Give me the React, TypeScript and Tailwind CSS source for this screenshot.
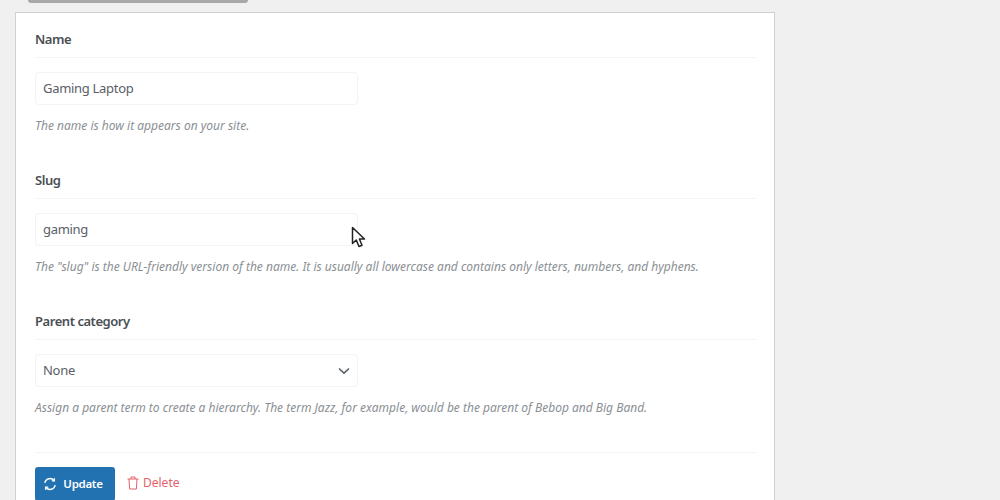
import React from "react";

function Section({ label, help, children }: { label: string; help: string; children: React.ReactNode }) {
  return (
    <div className="h-[141px]">
      <div className="h-[28px] border-b border-[#f3f3f4] text-[13px] leading-[18px] font-semibold tracking-[-0.45px] text-[#4a4f54]">{label}</div>
      <div className="mt-[14px]">{children}</div>
      <p className="mt-[12px] text-[12px] leading-[18px] italic text-[#8a8f94]">{help}</p>
    </div>
  );
}

function Field({ value, chevron }: { value: string; chevron?: boolean }) {
  return (
    <div className="flex h-[33px] w-[323px] items-center justify-between rounded-[4px] border border-[#f3f3f5] bg-white pl-[7px] pr-[7px] text-[13px] tracking-[-0.3px] text-[#5a6066]">
      <span className="pt-[1px]">{value}</span>
      {chevron && (
        <svg width="12" height="8" viewBox="0 0 12 8" fill="none" stroke="#5a6066" strokeWidth="1.6">
          <path d="M1 1.5 6 6.2 11 1.5" />
        </svg>
      )}
    </div>
  );
}

export default function App() {
  return (
    <div className="relative h-[500px] w-[1000px] overflow-hidden bg-[#f0f0f1] font-['Noto_Sans','Open_Sans',sans-serif]">
      <div className="ml-[28px] h-[3px] w-[220px] rounded-b-[3px] bg-[#a8a8a8]" />
      <div className="ml-[15px] mt-[9px] h-[600px] w-[760px] border border-[#cfd0d2] bg-white pl-[19px] pr-[18px] pt-[17px]">
        <Section label="Name" help="The name is how it appears on your site.">
          <Field value="Gaming Laptop" />
        </Section>
        <Section label="Slug" help={'The "slug" is the URL-friendly version of the name. It is usually all lowercase and contains only letters, numbers, and hyphens.'}>
          <Field value="gaming" />
        </Section>
        <Section label="Parent category" help="Assign a parent term to create a hierarchy. The term Jazz, for example, would be the parent of Bebop and Big Band.">
          <Field value="None" chevron />
        </Section>
        <div className="mt-[-1px] flex items-start border-t border-[#f3f3f4] pt-[14px]">
          <button className="flex h-[34px] w-[80px] items-center justify-center gap-[6px] rounded-[3px] bg-[#2271b1] pr-[4px] text-[11.5px] font-semibold tracking-[-0.3px] text-white">
            <svg width="14" height="14" viewBox="0 0 16 16" fill="none" stroke="#fff" strokeWidth="1.6" strokeLinecap="round">
              <path d="M2.2 6.2A6 6 0 0 1 12.6 4" />
              <path d="M13.8 9.8A6 6 0 0 1 3.4 12" />
              <path d="M13 2V4.4H10.6" />
              <path d="M3 14V11.6H5.4" />
            </svg>
            <span>Update</span>
          </button>
          <div className="ml-[12px] mt-[7px] flex items-center gap-[4px] text-[12px] text-[#e4606a]">
            <svg width="12" height="14" viewBox="0 0 12 14" fill="none" stroke="#e4606a" strokeWidth="1">
              <path d="M.5 3h11M2 3l.6 10h6.8L10 3M4 3V1h4v2" />
            </svg>
            Delete
          </div>
        </div>
      </div>
      <svg className="absolute left-[351px] top-[226px]" width="15" height="22" viewBox="0 0 15 22">
        <path d="M1.5 1.5V17.5L5.3 14 8 20.5 11 19.2 8.4 13H13.5Z" fill="#fff" stroke="#222" strokeWidth="1.5" strokeLinejoin="round" />
      </svg>
    </div>
  );
}
